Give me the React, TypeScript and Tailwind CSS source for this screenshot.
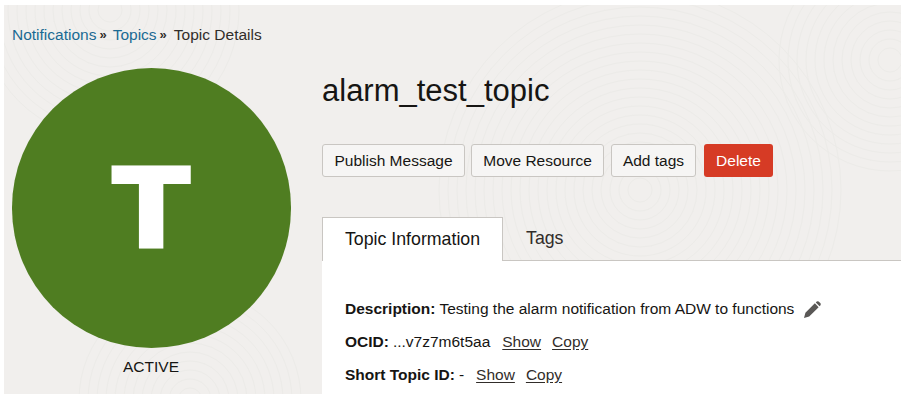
import React from "react";

const rings = [
	{ cx: 640, cy: 190, count: 22 },
	{ cx: 110, cy: 10, count: 14 },
	{ cx: 190, cy: 400, count: 12 },
	{ cx: 890, cy: 60, count: 12 },
];

// faint fingerprint texture behind the page
const Texture = () => (
	<svg
		className="absolute inset-0 w-full h-full"
		viewBox="0 0 897 389"
		aria-hidden="true"
	>
		{rings.map((ring) =>
			Array.from({ length: ring.count }).map((_, i) => (
				<circle
					key={`${ring.cx}-${i}`}
					cx={ring.cx - 4}
					cy={ring.cy - 5}
					r={12 + i * 9}
					fill="none"
					stroke="#ecebe8"
					strokeWidth="1"
				/>
			)),
		)}
	</svg>
);

const PencilIcon = () => (
	<svg
		className="ml-[10px] w-[17px] h-[17px] text-[#5a5856]"
		viewBox="0 0 18 18"
		aria-hidden="true"
	>
		<path
			fill="currentColor"
			d="M0 18 L1.5 12.5 L11.5 2.5 L15.5 6.5 L5.5 16.5 Z M12.5 1.5 L13.5 0.5 Q14.5 0 15.5 0.5 L17.5 2.5 Q18 3.5 17.5 4.5 L16.5 5.5 Z"
		/>
	</svg>
);

const Button = ({ label, width }: { label: string; width: string }) => (
	<button className={`h-[33px] ${width} rounded-[3px] border border-[#c9c6c2] bg-[#f6f5f4] text-[15.5px] text-[#161513]`}>{label}</button>
);

const LinkText = ({ children }: { children: React.ReactNode }) => <a className="underline text-[#312d2a] underline-offset-2">{children}</a>;

const App = () => {
	return (
		<div className="w-[901px] h-[402px] bg-white pl-[4px] pt-[5px] overflow-hidden font-['Liberation_Sans',Arial,sans-serif]">
			<div className="relative h-[389px] bg-[#f1efed]">
				<Texture />
				<div className="relative flex h-full">
					{/* left column */}
					<div className="w-[318px] shrink-0 pl-[8px]">
						<div className="flex items-center h-[20px] mt-[20px] text-[15.5px]">
							<a className="text-[#1b6a93]">Notifications</a>
							<span className="ml-[3px] text-[#312d2a] text-[13px] font-bold">»</span>
							<a className="ml-[6px] text-[#1b6a93]">Topics</a>
							<span className="ml-[3px] text-[#312d2a] text-[13px] font-bold">»</span>
							<span className="ml-[7px] whitespace-nowrap text-[#312d2a]">Topic Details</span>
						</div>
						<div className="mt-[23px] w-[279px] h-[280px] rounded-full bg-[#4f7d21] flex items-center justify-center">
							<span className="text-white font-bold text-[112px] leading-none scale-x-[1.1] -translate-y-[1px] [-webkit-text-stroke:6px_white]">T</span>
						</div>
						<p className="w-[278px] mt-[9px] text-center text-[15.5px] leading-[20px] text-[#161513]">ACTIVE</p>
					</div>

					{/* right column */}
					<div className="flex-1 flex flex-col pt-[66px]">
						<h1 className="text-[31px] leading-[40px] text-[#161513]">alarm_test_topic</h1>
						<div className="flex mt-[33px]">
							<Button
								label="Publish Message"
								width="w-[143px]"
							/>
							<div className="ml-[6px]">
								<Button
									label="Move Resource"
									width="w-[133px]"
								/>
							</div>
							<div className="ml-[7px]">
								<Button
									label="Add tags"
									width="w-[85px]"
								/>
							</div>
							<button className="ml-[8px] h-[33px] w-[69px] rounded-[3px] bg-[#d63b25] text-[15.5px] text-white">Delete</button>
						</div>
						<div className="flex mt-[40px] h-[44px] border-b border-[#c9c6c2]">
							<div className="w-[181px] h-[44px] bg-white border border-b-0 border-[#c9c6c2] flex items-center justify-center text-[17.75px] text-[#161513]">
								Topic Information
							</div>
							<div className="ml-[23px] flex items-center text-[17.75px] text-[#312d2a]">Tags</div>
						</div>
						<div className="flex-1 bg-white pl-[23px] pt-[38px] text-[15.5px] leading-[20px] text-[#161513]">
							<div className="flex items-center">
								<b>Description:</b>
								<span className="ml-[4px]">Testing the alarm notification from ADW to functions</span>
								<PencilIcon />
							</div>
							<div className="flex items-center mt-[13px]">
								<b>OCID:</b>
								<span className="ml-[4px]">...v7z7m6t5aa</span>
								<span className="ml-[12px]">
									<LinkText>Show</LinkText>
								</span>
								<span className="ml-[11px]">
									<LinkText>Copy</LinkText>
								</span>
							</div>
							<div className="flex items-center mt-[13px]">
								<b>Short Topic ID:</b>
								<span className="ml-[4px]">-</span>
								<span className="ml-[12px]">
									<LinkText>Show</LinkText>
								</span>
								<span className="ml-[11px]">
									<LinkText>Copy</LinkText>
								</span>
							</div>
						</div>
					</div>
				</div>
			</div>
		</div>
	);
};

export default App;
